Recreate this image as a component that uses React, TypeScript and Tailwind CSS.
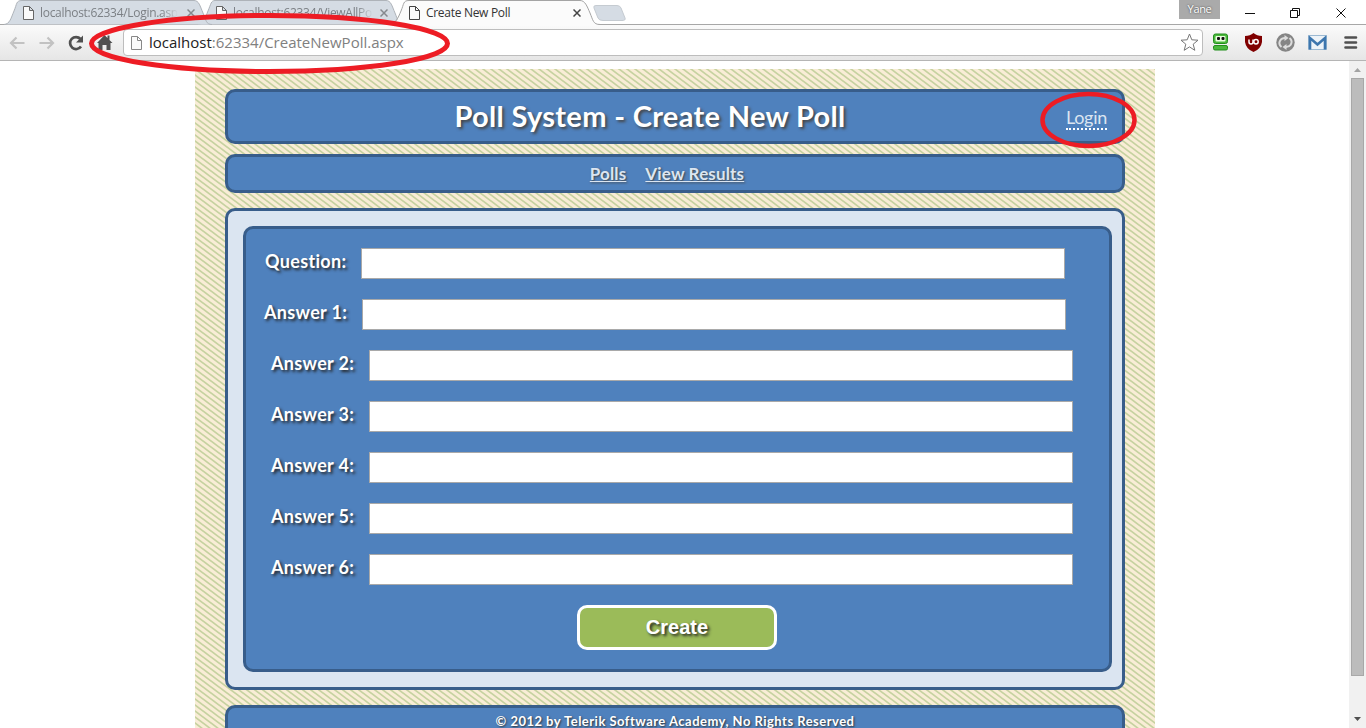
import React from "react";

const labelText = "text-white font-bold tracking-[0.33px] font-['Lato','Liberation_Sans',sans-serif] [font-variant-ligatures:none] [text-shadow:2px_2px_3px_#222]";

function PageIcon({ className = "", stroke = "#666" }: { className?: string; stroke?: string }) {
  return (
    <svg className={`shrink-0 ${className}`} width="11" height="14" viewBox="0 0 11 14" fill="#fafafa" stroke={stroke}>
      <path d="M.5.5h6l4 4v9H.5zM6.500.5v4h4" />
    </svg>
  );
}

function CloseIcon({ stroke = "#777" }: { stroke?: string }) {
  return (
    <svg className="shrink-0" width="8" height="8" viewBox="0 0 8 8" stroke={stroke} strokeWidth="1.500">
      <path d="M.5.5l7 7M7.500.5l-7 7" />
    </svg>
  );
}

function TabShapes() {
  return (
    <svg className="absolute left-0 top-0" width="1366" height="28" viewBox="0 0 1366 28" fill="none">
      <path d="M0 24.500H1366" stroke="#a7a7a7" />
      <path d="M198 24.500C205 24 205 18 208 11S211 .5 215 .5H386C391 .5 392 6 395 13S398 24.500 404 24.500" fill="#d5dce4" stroke="#aeb3b9" />
      <path d="M4 24.500C10 24 11 18 14 11S16 .5 22 .5H194C199 .5 200 6 203 13S206 24.500 212 24.500" fill="#d5dce4" stroke="#aeb3b9" />
      <path d="M391 26V24.500C397 24 398 18 401 11S403 .5 409 .5H580C585 .5 587 6 590 13S593 24.500 600 24.500V26Z" fill="#fbfbfb" />
      <path d="M388 24.500C396 24 398 18 401 11S403 .5 409 .5H580C585 .5 587 6 590 13S593 24.500 600 24.500" stroke="#a4a4a4" />
      <path d="M596 5.500H617Q620 5.500 621 8L625 18Q626 20.500 622 20.500H603Q599 20.500 598 18L594 8Q593 5.500 596 5.500Z" fill="#d5dce4" stroke="#c5cbd1" />
    </svg>
  );
}

function TabBar() {
  return (
    <header className="relative h-6 shrink-0 font-['Open_Sans','Noto_Sans',sans-serif] text-[12px] leading-6">
      <TabShapes />
      <div className="relative flex h-[26px] items-center">
        <div className="ml-[23px] flex w-[192px] items-center text-[#7c8085]">
          <PageIcon />
          <span className="ml-[6px] w-[138px] whitespace-nowrap tracking-[-0.025em] [mask-image:linear-gradient(90deg,#000_88%,transparent)]">localhost:62334/Login.asp</span>
          <span className="ml-[9px]"><CloseIcon stroke="#85898e" /></span>
        </div>
        <div className="ml-px flex w-[192px] items-center text-[#7c8085]">
          <PageIcon />
          <span className="ml-[6px] w-[140px] whitespace-nowrap tracking-[-0.025em] [mask-image:linear-gradient(90deg,#000_88%,transparent)]">localhost:62334/ViewAllPo</span>
          <span className="ml-[7px]"><CloseIcon stroke="#85898e" /></span>
        </div>
        <div className="ml-px flex w-[192px] items-center text-[#333]">
          <PageIcon stroke="#444" />
          <span className="ml-[6px] w-[138px] whitespace-nowrap tracking-[-0.025em]">Create New Poll</span>
          <span className="ml-[9px]"><CloseIcon stroke="#444" /></span>
        </div>
        <div className="ml-[578px] mt-[-8px] h-[19px] w-[41px] bg-[#aaa] text-center text-[11px] leading-[17px] tracking-[-0.03em] text-white [text-shadow:0_0_2px_#333]">Yane</div>
        <svg className="ml-[25px] shrink-0" width="102" height="12" viewBox="0 0 102 12" fill="none" stroke="#111">
          <path d="M0 6.500h10M45.500 3.500h7v7h-7zM47.500 3.500v-2h7v7h-2M91.500 1.500l9 9M100.500 1.500l-9 9" />
        </svg>
      </div>
    </header>
  );
}

function Extensions() {
  return (
    <svg className="mt-px shrink-0" width="154" height="24" viewBox="0 0 154 24" fill="none">
      <rect x="1.500" y="3" width="14" height="9.500" rx="2" fill="#4bb83c" stroke="#218e1b" />
      <rect x="3.500" y="5" width="10" height="5.500" rx="1" fill="#eaffdf" />
      <rect x="5" y="6" width="3" height="3" rx="1" fill="#111" /><rect x="9.500" y="6" width="3" height="3" rx="1" fill="#111" />
      <rect x="1.500" y="14.500" width="14" height="4.500" rx="1.500" fill="#4bb83c" stroke="#218e1b" />
      <path d="M41.500 2Q45 5 50 5V11Q49 18 41.500 21Q34 18 33 11V5Q38 5 41.500 2Z" fill="#800000" />
      <path d="M37 8.500v2.500q0 2 2 2t2-2V8.500" stroke="#fff" strokeWidth="1.500" /><circle cx="44" cy="10.700" r="2.200" stroke="#fff" strokeWidth="1.500" />
      <circle cx="73.500" cy="11.500" r="9.200" fill="#858585" />
      <path d="M69.500 16q-3.500-3-1.200-6.700 1.500-2.300 4.700-2.300M77.500 7q3.500 3 1.200 6.700-1.500 2.300-4.700 2.300" stroke="#ddd" strokeWidth="2" />
      <path d="M72.500 4l4 3-4 3zM74.500 19l-4-3 4-3z" fill="#ddd" />
      <path d="M96.500 4.500h18v14h-18z" fill="#edf3f8" stroke="#9bb9d2" />
      <path d="M98 18.500V7l7.500 6.500L113 7v11.500" stroke="#3d76ae" strokeWidth="2.600" />
      <path d="M133.500 6.500h10.500M133.500 11.500h10.500M133.500 16.500h10.500" stroke="#505050" strokeWidth="2.600" strokeLinecap="round" />
    </svg>
  );
}

function Toolbar() {
  return (
    <div className="flex h-[37px] shrink-0 items-center border-b border-[#b5b5b5] bg-linear-to-b from-[#fbfbfb] to-[#e6e6e6]">
      <svg className="ml-[9px] mt-px shrink-0" width="104" height="24" viewBox="0 0 104 24" fill="none">
        <path d="M15.500 12H2M7.500 6.500L2 12l5.500 5.500M30.500 12H44M38.500 6.500L44 12l-5.500 5.500" stroke="#c2c2c2" strokeWidth="2.200" />
        <path d="M72 15.500A6 6 0 1 1 71.500 8" stroke="#505050" strokeWidth="2.700" /><path d="M74 4.500v7h-7z" fill="#505050" />
        <path d="M88 12L95.500 4l3 3V4.500h2V9l3 3h-2v7h-4v-5h-4v5h-4v-7z" fill="#505050" />
      </svg>
      <div className="ml-[10px] flex h-[27px] w-[1080px] items-center rounded-sm border border-[#bdbdbd] bg-white">
        <PageIcon className="ml-[7px] mt-px" stroke="#888" />
        <span className="ml-[7px] mt-px font-['Open_Sans','Noto_Sans',sans-serif] text-[15px] text-[#808080]"><span className="text-[#222]">localhost</span>:62334/CreateNewPoll.aspx</span>
        <svg className="ml-auto mr-[3px]" width="19" height="19" viewBox="0 0 19 19" fill="#fff" stroke="#777" strokeLinejoin="round">
          <path d="M9.500 1l2.300 5.800 6.200.4-4.800 4 1.600 6.100-5.300-3.400-5.300 3.400 1.600-6.100-4.800-4 6.200-.4z" />
        </svg>
      </div>
      <div className="ml-[9px]"><Extensions /></div>
    </div>
  );
}

function Field({ label, indent, gap }: { label: string; indent: string; gap: string }) {
  return (
    <div className={`flex h-[31px] items-center ${indent}`}>
      <label className={`${gap} shrink-0 whitespace-nowrap text-[18px] leading-6 -mt-[5px] ${labelText}`}>{label}</label>
      <input aria-label={label} className="h-[31px] w-[704px] shrink-0 border border-[#a9a9a9] bg-white" />
    </div>
  );
}

function PollForm() {
  const answers = [2, 3, 4, 5, 6];
  return (
    <section className="mt-[15px] h-[482px] rounded-[10px] border-[3px] border-[#385d8a] bg-[#dbe5f1] p-[15px] pr-[10px]">
      <form className="flex h-[446px] flex-col gap-5 rounded-[10px] border-[3px] border-[#385d8a] bg-[#4f81bd] pt-[19px]">
        <Field label="Question:" indent="ml-[19px]" gap="w-[96px]" />
        <Field label="Answer 1:" indent="ml-[18px]" gap="w-[98px]" />
        {answers.map((n) => (
          <Field key={n} label={`Answer ${n}:`} indent="ml-[25px]" gap="w-[98px]" />
        ))}
        <button type="button" className="ml-[331px] h-[45px] w-[200px] shrink-0 rounded-[10px] border-[3px] border-white bg-[#9bbb59] pb-px font-['Liberation_Sans',sans-serif] text-[20px] font-bold text-white [text-shadow:2px_2px_3px_#222]">Create</button>
      </form>
    </section>
  );
}

function Hatch() {
  return (
    <svg className="absolute inset-0" width="960" height="660">
      <defs>
        <pattern id="hatch" width="8" height="6" patternUnits="userSpaceOnUse">
          <rect width="8" height="6" fill="#f9edd6" />
          <path d="M-4-3L12 9M-4 3L4 9M4-3L12 3" stroke="#c6d2a0" strokeWidth="1.700" />
        </pattern>
      </defs>
      <rect width="960" height="660" fill="url(#hatch)" />
    </svg>
  );
}

function Site() {
  return (
    <main className="relative ml-[195px] mt-2 h-[659px] w-[960px] shrink-0 overflow-hidden">
      <Hatch />
      <div className="relative px-[30px] pt-5">
        <div className="relative flex h-[55px] items-center justify-center rounded-[10px] border-[3px] border-[#385d8a] bg-[#4f81bd]">
          <h1 className="-ml-[50px] -mt-px whitespace-nowrap font-['Lato',sans-serif] text-[29px] font-bold leading-9 tracking-[0.33px] text-white [text-shadow:2px_2px_3px_#444]">Poll System - Create New Poll</h1>
          <a href="#login" className="absolute right-[15px] top-[14px] border-b-2 border-dotted border-white font-['Lato',sans-serif] text-[18px] leading-[22px] tracking-[-0.015em] text-[#dbe5f1]">Login</a>
        </div>
        <nav className="mt-[10px] flex h-[39px] items-center justify-center gap-[19px] rounded-[10px] border-[3px] border-[#385d8a] bg-[#4f81bd] pr-4 pt-px font-['Lato',sans-serif] text-[17px] font-bold tracking-[0.15px] text-[#dbe5f1] [text-shadow:1px_1px_2px_#444]">
          <a href="#polls" className="underline">Polls</a>
          <a href="#results" className="underline">View Results</a>
        </nav>
        <PollForm />
        <footer className="mt-[15px] h-[55px] rounded-[10px] border-[3px] border-[#385d8a] bg-[#4f81bd] pt-[3px] text-center font-['Lato',sans-serif] text-[13px] font-bold leading-[20px] tracking-[0.48px] text-white [text-shadow:1px_1px_2px_#333]">© 2012 by Telerik Software Academy, No Rights Reserved</footer>
      </div>
    </main>
  );
}

function ScrollBar() {
  return (
    <div className="ml-auto flex h-full w-[17px] flex-col items-center bg-[#f1f1f1]">
      <svg width="17" height="17"><path d="M5 11L8.500 7 12 11z" fill="#a3a3a3" /></svg>
      <div className="h-[598px] w-[13px] border border-[#a8a8a8] bg-[#bcbcbc]" />
      <svg className="mt-auto" width="17" height="17"><path d="M5 6L8.500 10 12 6z" fill="#505050" /></svg>
    </div>
  );
}

export default function App() {
  return (
    <div className="relative flex h-[728px] w-[1366px] flex-col overflow-hidden bg-white">
      <TabBar />
      <Toolbar />
      <div className="flex min-h-0 flex-1">
        <Site />
        <ScrollBar />
      </div>
      <svg className="pointer-events-none absolute inset-0" width="1366" height="728" fill="none" stroke="#ed1c24">
        <ellipse cx="269.500" cy="43.500" rx="178" ry="28" strokeWidth="5" />
        <ellipse cx="1088.500" cy="120" rx="46" ry="26" strokeWidth="4.500" />
      </svg>
    </div>
  );
}
